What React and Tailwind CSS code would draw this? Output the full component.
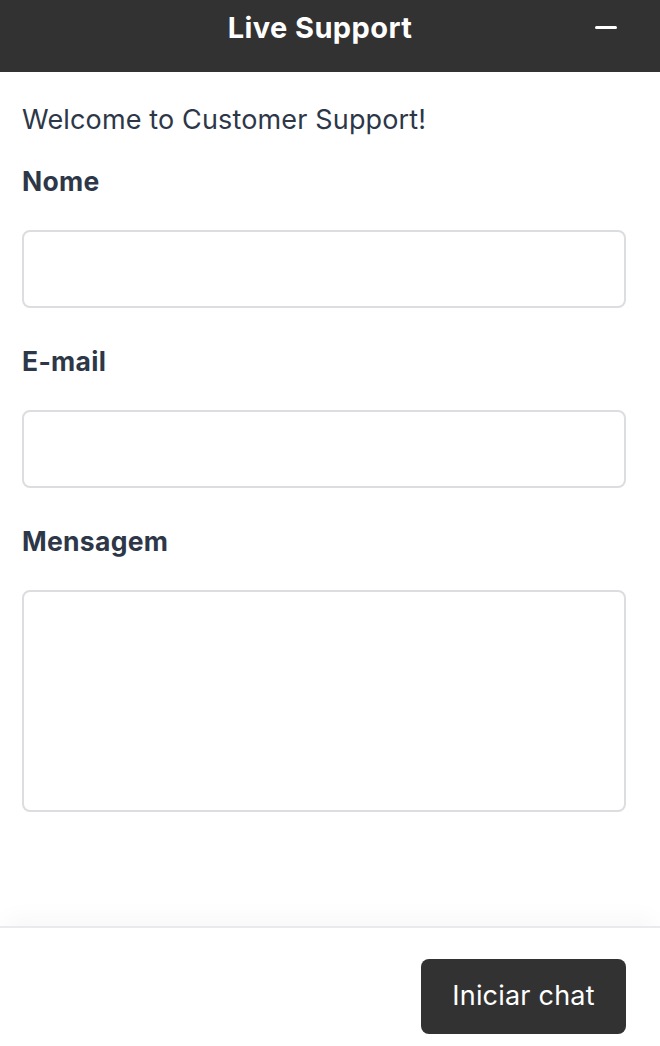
import React from 'react'

const Field = ({ label, tall }) => (
  <div className="flex flex-col">
    <label className="text-[26.5px] leading-[36px] font-bold tracking-[0.3px] text-[#2d3748]">{label}</label>
    {tall ? (
      <textarea className="mt-[31px] h-[222px] w-full rounded-[8px] border-2 border-[#dcdde0] bg-white resize-none outline-none" />
    ) : (
      <input className="mt-[31px] h-[78px] w-full rounded-[8px] border-2 border-[#dcdde0] bg-white outline-none" />
    )}
  </div>
)

export default function App() {
  return (
    <div className="flex h-[1046px] w-[660px] flex-col bg-white font-['Inter',sans-serif]">
      <div className="relative flex h-[72px] shrink-0 items-center justify-center bg-[#323232] pr-[20px]">
        <h1 className="-mt-[16px] text-[29px] font-bold text-white tracking-[0.4px]">Live Support</h1>
        <button className="absolute right-[43px] top-[26px] h-[3px] w-[22px] rounded-full bg-white" aria-label="minimize" />
      </div>

      <div className="flex flex-1 flex-col pl-[22px] pr-[34px] pt-[30px]">
        <p className="text-[27px] leading-[36px] tracking-[0.15px] text-[#2d3748]">Welcome to Customer Support!</p>
        <div className="mt-[25px] flex flex-col gap-[35px]">
          <Field label="Nome" />
          <Field label="E-mail" />
          <Field label="Mensagem" tall />
        </div>
      </div>

      <div className="flex h-[120px] shrink-0 items-start justify-end border-t-2 border-[#e8eaed] pr-[34px] pt-[31px] shadow-[0_-14px_22px_-6px_rgba(0,0,0,0.035)]">
        <button className="h-[75px] w-[205px] rounded-[8px] bg-[#323232] text-[27px] tracking-[0.2px] text-white">Iniciar chat</button>
      </div>
    </div>
  )
}
